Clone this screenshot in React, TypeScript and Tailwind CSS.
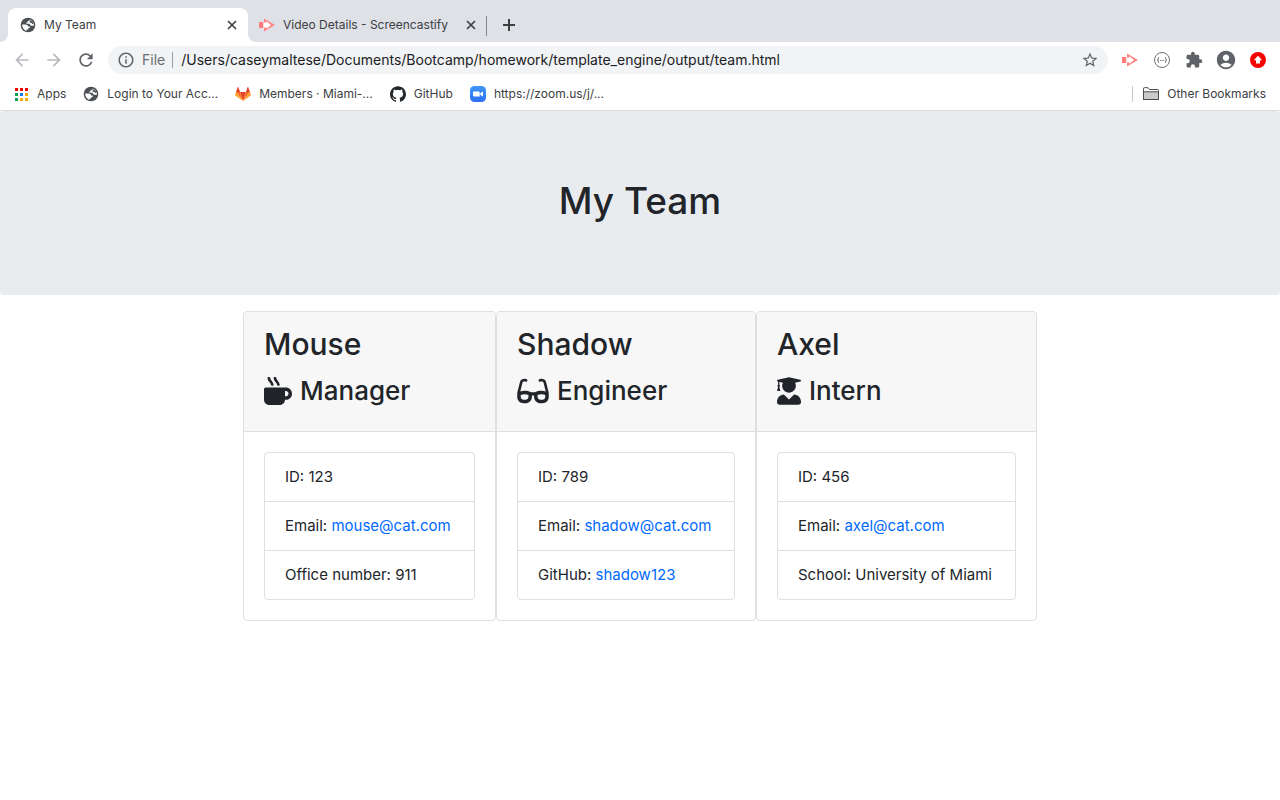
import type { ReactNode } from "react";
import {
  MdAccountCircle,
  MdArrowBack,
  MdArrowForward,
  MdExtension,
  MdInfoOutline,
  MdRefresh,
  MdStarBorder,
} from "react-icons/md";
import { FaGlasses, FaMugHot, FaUserGraduate } from "react-icons/fa";
import { SiGithub } from "react-icons/si";

function GlobeIcon() {
  return (
    <svg viewBox="0 0 16 16" className="size-4 shrink-0" aria-hidden="true">
      <circle cx="8" cy="8" r="7.3" fill="#4b4f54" />
      <path
        d="M2.100 7.500h3.400c1.500 0 2.400.7 2.600 1.900h1.700v1.700H8.300v1.300H6.500v1.500C3.900 13 2.100 10.600 2.100 7.500z"
        fill="#fff"
      />
      <path
        d="M9.700 2.400 9.300 4H7.600v1.500H6.300c-.3.900.3 1.300 1.200 1.300h2.100c.3 1.300.8 1.900 1.700 1.900h2.600C14.200 5.800 12.500 3.300 9.700 2.400z"
        fill="#fff"
      />
      <path d="M10.300 3.200c1.700.6 3 1.900 3.400 3.600l-1.300.2-1-1.300H9.700V4.600z" fill="#4b4f54" />
    </svg>
  );
}

function ScreencastifyIcon() {
  return (
    <svg viewBox="0 0 16 16" className="size-4 shrink-0" aria-hidden="true">
      <path d="M0 5h4.500v6H0z" fill="#ff7d7d" />
      <path d="M5 1.500 16 8 5 14.500z" fill="#ff8585" />
      <path d="M4.500 5.600h3V4.300L12 8l-4.500 3.700v-1.300h-3z" fill="#fff" />
    </svg>
  );
}

function CloseIcon() {
  return (
    <svg viewBox="0 0 16 16" className="size-4" fill="none" stroke="#3c4043" strokeWidth="1.700" aria-hidden="true">
      <path d="m4 4 8 8M12 4l-8 8" />
    </svg>
  );
}

function PlusIcon() {
  return (
    <svg viewBox="0 0 20 20" className="size-5" fill="none" stroke="#3c4043" strokeWidth="2" aria-hidden="true">
      <path d="M10 4v12M4 10h12" />
    </svg>
  );
}

function AppsIcon() {
  const dots = ["#f00000", "#f00000", "#f00000", "#0f9d58", "#1a73e8", "#fbab00", "#0f9d58", "#fbab00", "#fbab00"];
  return (
    <svg viewBox="0 0 13 13" className="mx-px size-[13px] shrink-0" aria-hidden="true">
      {dots.map((fill, i) => (
        <rect key={i} x={(i % 3) * 5} y={Math.floor(i / 3) * 5} width="3" height="3" fill={fill} />
      ))}
    </svg>
  );
}

function GitLabIcon() {
  return (
    <svg viewBox="0 0 16 16" className="size-4 shrink-0" aria-hidden="true">
      <path d="M8 15 5.100 6h5.800z" fill="#e24329" />
      <path d="M8 15 5.100 6H1z" fill="#fc6d26" />
      <path d="M8 15l2.900-9H15z" fill="#fc6d26" />
      <path d="M1 6 .1 8.700c-.1.300 0 .5.200.7L8 15z" fill="#fca326" />
      <path d="m15 6 .9 2.700c.1.300 0 .5-.2.700L8 15z" fill="#fca326" />
      <path d="M1 6h4.100L3.300.9c-.1-.3-.4-.3-.5 0z" fill="#e24329" />
      <path d="M15 6h-4.100L12.700.9c.1-.3.400-.3.500 0z" fill="#e24329" />
    </svg>
  );
}

function ZoomIcon() {
  return (
    <svg viewBox="0 0 16 16" className="size-4 shrink-0" aria-hidden="true">
      <defs>
        <linearGradient id="zoom-blue" x1="0" y1="0" x2="0" y2="1">
          <stop offset="0" stopColor="#3f96f8" />
          <stop offset="1" stopColor="#2f70f5" />
        </linearGradient>
      </defs>
      <rect width="16" height="16" rx="4.500" fill="url(#zoom-blue)" />
      <path d="M3 5.500h5.500c.8 0 1.200.5 1.200 1.200v3.800H4.300c-.8 0-1.300-.5-1.300-1.200z" fill="#fff" />
      <path d="m10.200 7.200 2.800-1.700v5l-2.800-1.700z" fill="#fff" />
    </svg>
  );
}

function BracesIcon() {
  return (
    <svg viewBox="0 0 16 16" className="size-4" fill="none" stroke="#5f6368" aria-hidden="true">
      <circle cx="8" cy="8" r="7.500" strokeWidth=".9" />
      <path
        d="M5.100 5.300c-1.200 0-.7 1-.8 1.800 0 .5-.3.900-.9.900.6 0 .9.400.9.900.1.800-.4 1.800.8 1.800M10.900 5.300c1.200 0 .7 1 .8 1.800 0 .5.300.9.900.9-.6 0-.9.400-.9.900-.1.800.4 1.800-.8 1.800"
        strokeWidth="1"
      />
      <path d="M6.100 8.500h4" strokeWidth=".9" strokeDasharray="1 .5" />
    </svg>
  );
}

function UpdateIcon() {
  return (
    <svg viewBox="0 0 16 16" className="size-4" aria-hidden="true">
      <circle cx="8" cy="8" r="8" fill="#f60000" />
      <path d="m8 3.800 4.200 4.400H10V11.500H6V8.200H3.800z" fill="#fff" />
    </svg>
  );
}

function FolderIcon() {
  return (
    <svg viewBox="0 0 16 14" className="h-3.5 w-4 shrink-0" stroke="#4b4b4b" strokeLinejoin="round" aria-hidden="true">
      <path d="M.5 12.500V1.500c0-.5.300-.8.800-.8H5l1.500 1.800h8.200c.5 0 .8.300.8.800v9.200z" fill="#fff" />
      <path d="M.5 4.800h15v7.700H.5z" fill="#c9c9c9" />
    </svg>
  );
}

function Tab({ icon, title, active = false }: { icon: ReactNode; title: string; active?: boolean }) {
  return (
    <div
      className={
        active
          ? "flex h-[34px] w-60 items-center gap-2 rounded-t-lg bg-white pr-2 pl-3 text-[#3c4043]"
          : "flex h-[34px] w-[238px] items-center gap-2 pr-[7px] pl-[11px] text-[#3c4043]"
      }
    >
      {icon}
      <span className="grow truncate">{title}</span>
      <button type="button" aria-label={`Close ${title}`}>
        <CloseIcon />
      </button>
    </div>
  );
}

function Bookmark({ icon, children }: { icon: ReactNode; children: ReactNode }) {
  return (
    <a href="#" className="flex items-center gap-2 whitespace-nowrap">
      {icon}
      {children}
    </a>
  );
}

function ToolbarButton({ label, children }: { label: string; children: ReactNode }) {
  return (
    <button type="button" aria-label={label} className="flex size-8 items-center justify-center">
      {children}
    </button>
  );
}

function BrowserChrome() {
  return (
    <header className="border-b border-[#dadce0] text-xs text-[#3c4043]">
      <div className="flex h-[42px] items-stretch bg-[#dee1e6]">
        <div className="flex w-2 bg-white">
          <div className="grow rounded-br-lg bg-[#dee1e6]" />
        </div>
        <div className="flex items-end">
          <Tab active icon={<GlobeIcon />} title="My Team" />
        </div>
        <div className="flex grow bg-white">
          <div className="flex grow items-end rounded-bl-lg bg-[#dee1e6]">
            <Tab icon={<ScreencastifyIcon />} title="Video Details - Screencastify" />
            <div className="mb-1.5 h-5 w-px bg-[#80868b]" />
            <button type="button" aria-label="New tab" className="mb-[7px] ml-3 size-5">
              <PlusIcon />
            </button>
          </div>
        </div>
      </div>
      <div className="flex h-9 items-center pr-1.5 pl-3">
        <div className="flex gap-3 pr-3 text-[#5f6368]">
          <button type="button" aria-label="Back" className="text-[#b9bbbe]"><MdArrowBack className="size-5" /></button>
          <button type="button" aria-label="Forward" className="text-[#b9bbbe]"><MdArrowForward className="size-5" /></button>
          <button type="button" aria-label="Reload"><MdRefresh className="size-5" /></button>
        </div>
        <div className="flex h-7 grow items-center rounded-full bg-[#f1f3f4] px-[9px] text-sm">
          <MdInfoOutline className="size-[18px] text-[#5f6368]" />
          <label htmlFor="address" className="ml-[7px] text-[#6b6f73]">File</label>
          <span className="mr-2 ml-[7px] h-4 w-px bg-[#9aa0a6]" />
          <input
            id="address"
            className="min-w-0 grow bg-transparent text-sm text-[#202124] outline-none"
            defaultValue="/Users/caseymaltese/Documents/Bootcamp/homework/template_engine/output/team.html"
          />
          <button type="button" aria-label="Bookmark this page"><MdStarBorder className="size-[18px] text-[#5f6368]" /></button>
        </div>
        <div className="flex items-center pl-1.5 text-[#5f6368]">
          <ToolbarButton label="Screencastify"><ScreencastifyIcon /></ToolbarButton>
          <ToolbarButton label="Code tools"><BracesIcon /></ToolbarButton>
          <ToolbarButton label="Extensions"><MdExtension className="size-[18px]" /></ToolbarButton>
          <ToolbarButton label="Profile"><MdAccountCircle className="size-[22px]" /></ToolbarButton>
          <ToolbarButton label="Update"><UpdateIcon /></ToolbarButton>
        </div>
      </div>
      <nav aria-label="Bookmarks" className="flex h-8 items-center gap-[17px] px-3.5">
        <Bookmark icon={<AppsIcon />}>Apps</Bookmark>
        <Bookmark icon={<GlobeIcon />}>Login to Your Acc...</Bookmark>
        <Bookmark icon={<GitLabIcon />}>Members · Miami-...</Bookmark>
        <Bookmark icon={<SiGithub className="size-4 text-[#24292e]" />}>GitHub</Bookmark>
        <Bookmark icon={<ZoomIcon />}>https://zoom.us/j/...</Bookmark>
        <div className="ml-auto flex items-center gap-2.5">
          <span className="h-4 w-px bg-[#c8cacd]" />
          <Bookmark icon={<FolderIcon />}>Other Bookmarks</Bookmark>
        </div>
      </nav>
    </header>
  );
}

function Card({ name, role, icon, width, children }: { name: string; role: string; icon: ReactNode; width: string; children: ReactNode }) {
  return (
    <article className={`rounded border border-[#dfdfdf] ${width}`}>
      <div className="rounded-t border-b border-[#dfdfdf] bg-[#f7f7f7] px-5 pt-3 pb-[22px] font-medium">
        <h2 className="mb-2 text-[30px] leading-10">{name}</h2>
        <h3 className="flex items-center gap-2 text-[26px] leading-[37px]">
          {icon}
          {role}
        </h3>
      </div>
      <div className="p-5">
        <ul className="divide-y divide-[#dfdfdf] rounded border border-[#dfdfdf]">{children}</ul>
      </div>
    </article>
  );
}

function Item({ label, children }: { label: string; children: ReactNode }) {
  return (
    <li className="px-5 py-3 leading-6 whitespace-nowrap">
      {label}: {children}
    </li>
  );
}

export default function App() {
  return (
    <div className="min-h-screen bg-white font-['Inter','Liberation_Sans',sans-serif] text-[#212529]">
      <BrowserChrome />
      <main className="text-[15px]">
        <div className="mb-4 rounded bg-[#e9ecef] px-8 pt-[66px] pb-[70px] text-center">
          <h1 className="text-[37px] leading-[48px] font-medium">My Team</h1>
        </div>
        <div className="flex justify-center">
          <Card name="Mouse" role="Manager" width="w-[253px]" icon={<FaMugHot className="size-7" />}>
            <Item label="ID">123</Item>
            <Item label="Email"><a href="mailto:mouse@cat.com" className="text-[#0069ff]">mouse@cat.com</a></Item>
            <Item label="Office number">911</Item>
          </Card>
          <Card name="Shadow" role="Engineer" width="w-[260px]" icon={<FaGlasses className="h-7 w-8" />}>
            <Item label="ID">789</Item>
            <Item label="Email"><a href="mailto:shadow@cat.com" className="text-[#0069ff]">shadow@cat.com</a></Item>
            <Item label="GitHub"><a href="https://github.com/shadow123" className="text-[#0069ff]">shadow123</a></Item>
          </Card>
          <Card name="Axel" role="Intern" width="w-[281px]" icon={<FaUserGraduate className="h-7 w-6" />}>
            <Item label="ID">456</Item>
            <Item label="Email"><a href="mailto:axel@cat.com" className="text-[#0069ff]">axel@cat.com</a></Item>
            <Item label="School">University of Miami</Item>
          </Card>
        </div>
      </main>
    </div>
  );
}
